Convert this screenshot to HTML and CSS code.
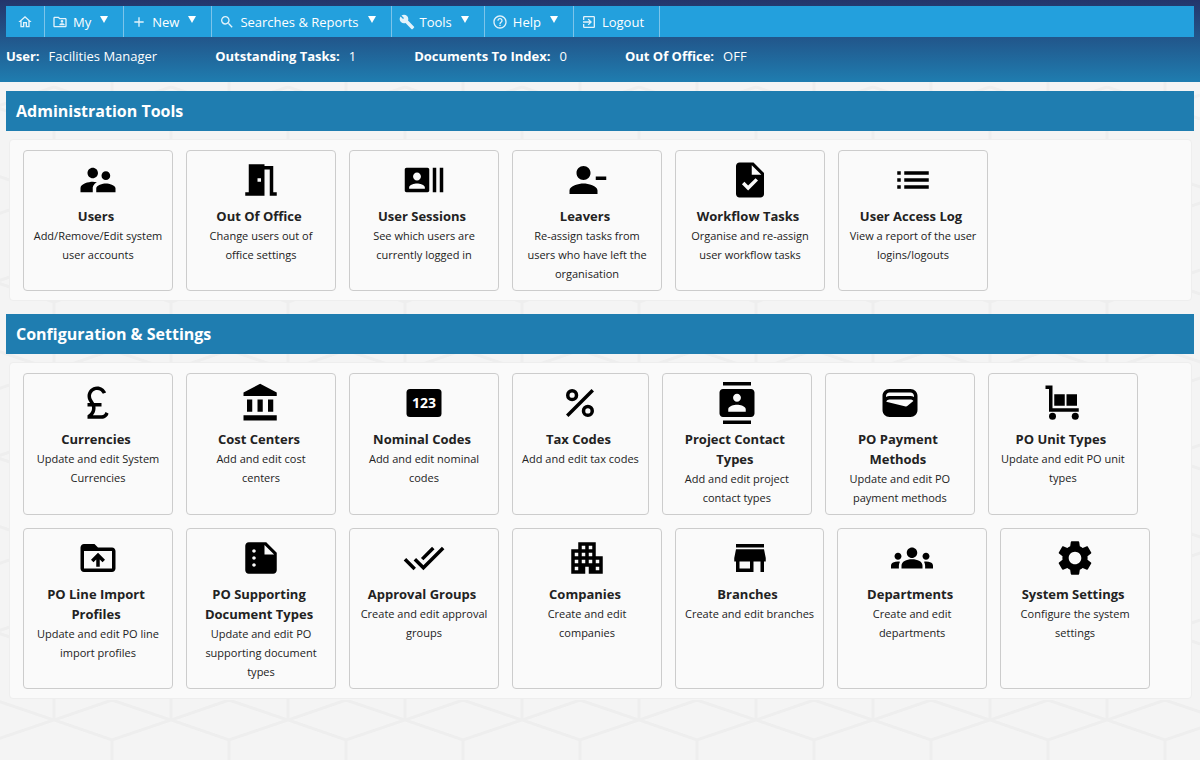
FILE: index.html
```html
<!DOCTYPE html>
<html lang="en">
<head>
    <meta charset="UTF-8">
    <meta name="viewport" content="width=device-width, initial-scale=1.0">
    <title>Administration Tools</title>
    <link rel="stylesheet" href="styles.css">
</head>
<body>
    <header class="top">
        <nav class="menu">
            <a class="menu-item home" href="#" aria-label="Home">
                <svg viewBox="0 0 24 24"><path d="M12 5.7l5 4.5V18h-2v-6H9v6H7v-7.8l5-4.5M12 3L2 12h3v8h6v-6h2v6h6v-8h3L12 3z"/></svg>
            </a>
            <button class="menu-item" type="button">
                <svg viewBox="0 0 24 24"><path d="M20 6h-8l-2-2H4c-1.100 0-2 .9-2 2v12c0 1.100.9 2 2 2h16c1.100 0 2-.9 2-2V8c0-1.100-.9-2-2-2zM4 18V6h5.200l2 2H20v10H4zm11-5c1.100 0 2-.9 2-2s-.9-2-2-2-2 .9-2 2 .9 2 2 2zm-4 4h8v-1c0-1.300-2.700-2-4-2s-4 .7-4 2v1z"/></svg>
                My <span class="arrow"></span>
            </button>
            <button class="menu-item" type="button">
                <svg viewBox="0 0 24 24"><path d="M19 13h-6v6h-2v-6H5v-2h6V5h2v6h6v2z"/></svg>
                New <span class="arrow"></span>
            </button>
            <button class="menu-item" type="button">
                <svg viewBox="0 0 24 24"><path d="M15.500 14h-.79l-.28-.27A6.471 6.471 0 0 0 16 9.500 6.500 6.500 0 1 0 9.500 16c1.610 0 3.090-.59 4.230-1.570l.27.28v.79l5 4.990L20.490 19l-4.990-5zm-6 0C7.010 14 5 11.990 5 9.500S7.010 5 9.500 5 14 7.010 14 9.500 11.990 14 9.500 14z"/></svg>
                Searches &amp; Reports <span class="arrow"></span>
            </button>
            <button class="menu-item" type="button">
                <svg viewBox="0 0 24 24"><path d="M22.610 18.990l-9.080-9.080c.93-2.340.45-5.100-1.440-7C9.790.610 6.210.400 3.660 2.260L7.500 6.110 6.080 7.520 2.250 3.690C.390 6.230.600 9.820 2.900 12.110c1.860 1.860 4.570 2.350 6.890 1.480l9.110 9.110c.39.39 1.020.39 1.410 0l2.300-2.300c.4-.38.4-1.010 0-1.410z"/></svg>
                Tools <span class="arrow"></span>
            </button>
            <button class="menu-item" type="button">
                <svg viewBox="0 0 24 24"><path d="M11 18h2v-2h-2v2zm1-16C6.480 2 2 6.480 2 12s4.480 10 10 10 10-4.480 10-10S17.520 2 12 2zm0 18c-4.410 0-8-3.590-8-8s3.590-8 8-8 8 3.590 8 8-3.590 8-8 8zm0-14c-2.210 0-4 1.790-4 4h2c0-1.100.9-2 2-2s2 .9 2 2c0 2-3 1.750-3 5h2c0-2.250 3-2.500 3-5 0-2.210-1.790-4-4-4z"/></svg>
                Help <span class="arrow"></span>
            </button>
            <a class="menu-item" href="#">
                <svg viewBox="0 0 24 24"><path d="M10.090 15.590L11.500 17l5-5-5-5-1.410 1.410L12.670 11H3v2h9.670l-2.580 2.590zM19 3H5a2 2 0 0 0-2 2v4h2V5h14v14H5v-4H3v4a2 2 0 0 0 2 2h14c1.100 0 2-.9 2-2V5c0-1.100-.9-2-2-2z"/></svg>
                Logout
            </a>
        </nav>
        <dl class="status">
            <div><dt>User:</dt><dd>Facilities Manager</dd></div>
            <div><dt>Outstanding Tasks:</dt><dd>1</dd></div>
            <div><dt>Documents To Index:</dt><dd>0</dd></div>
            <div><dt>Out Of Office:</dt><dd>OFF</dd></div>
        </dl>
    </header>

    <main>
        <section>
            <h2>Administration Tools</h2>
            <div class="panel">
                <a class="card" href="#">
                    <svg viewBox="0 0 24 24"><path d="M16.500 12c1.380 0 2.490-1.120 2.490-2.500S17.880 7 16.500 7 14 8.120 14 9.500s1.120 2.500 2.500 2.500zM9 11c1.660 0 2.990-1.340 2.990-3S10.660 5 9 5 6 6.340 6 8s1.340 3 3 3zm7.500 3c-1.830 0-5.500.92-5.500 2.750V19h11v-2.250c0-1.830-3.670-2.750-5.500-2.750zM9 13c-2.330 0-7 1.170-7 3.500V19h7v-2.250c0-.85.33-2.340 2.370-3.470C10.500 13.100 9.660 13 9 13z"/></svg>
                    <h3>Users</h3>
                    <p>Add/Remove/Edit system user accounts</p>
                </a>
                <a class="card" href="#">
                    <svg viewBox="0 0 24 24"><path fill-rule="evenodd" d="M14 6v15H3v-2h2V3h9v1h5v15h2v2h-4V6h-3zm-4 5v2h2v-2h-2z"/></svg>
                    <h3>Out Of Office</h3>
                    <p>Change users out of office settings</p>
                </a>
                <a class="card" href="#">
                    <svg viewBox="0 0 24 24"><path d="M21 5v14h2V5h-2zm-4 14h2V5h-2v14zM14 5H2c-.55 0-1 .45-1 1v12c0 .55.45 1 1 1h12c.55 0 1-.45 1-1V6c0-.55-.45-1-1-1zM8 7.750c1.240 0 2.250 1.010 2.250 2.250S9.240 12.250 8 12.250 5.750 11.240 5.750 10 6.760 7.750 8 7.750zM12.500 17h-9v-.75c0-1.500 3-2.250 4.500-2.250s4.500.75 4.500 2.250V17z"/></svg>
                    <h3>User Sessions</h3>
                    <p>See which users are currently logged in</p>
                </a>
                <a class="card" href="#">
                    <svg viewBox="0 0 24 24"><path d="M14 8c0-2.210-1.790-4-4-4S6 5.790 6 8s1.790 4 4 4 4-1.790 4-4zm3 2v2h6v-2h-6zM2 18v2h16v-2c0-2.660-5.330-4-8-4s-8 1.340-8 4z"/></svg>
                    <h3>Leavers</h3>
                    <p>Re-assign tasks from users who have left the organisation</p>
                </a>
                <a class="card" href="#">
                    <svg viewBox="0 0 24 24"><path d="M14 2H6c-1.100 0-2 .9-2 2v16c0 1.100.89 2 1.990 2H18c1.100 0 2-.9 2-2V8l-6-6zm-3.060 16L7.400 14.460l1.410-1.410 2.120 2.120 4.240-4.240 1.410 1.410L10.940 18zM13 9V3.500L18.500 9H13z"/></svg>
                    <h3>Workflow Tasks</h3>
                    <p>Organise and re-assign user workflow tasks</p>
                </a>
                <a class="card" href="#">
                    <svg viewBox="0 0 24 24"><path d="M3 13h2v-2H3v2zm0 4h2v-2H3v2zm0-8h2V7H3v2zm4 4h14v-2H7v2zm0 4h14v-2H7v2zM7 7v2h14V7H7z"/></svg>
                    <h3>User Access Log</h3>
                    <p>View a report of the user logins/logouts</p>
                </a>
            </div>
        </section>

        <section>
            <h2>Configuration &amp; Settings</h2>
            <div class="panel">
                <a class="card" href="#">
                    <svg viewBox="0 0 24 24"><path d="M14 21c1.930 0 3.620-1.170 4-3l-1.750-.88C16 18.210 15.330 19 14 19H9.100c.83-1 1.500-2.340 1.500-4 0-.35-.03-.69-.08-1H14v-2H9.820C9 10.420 8 9.600 8 8c0-1.930 1.570-3.500 3.500-3.500 1.500 0 2.790.95 3.280 2.280L16.630 6c-.8-2.050-2.790-3.500-5.130-3.500C8.460 2.500 6 4.960 6 8c0 1.780.79 2.900 1.490 4H6v2h2.470c.08.31.13.64.13 1 0 2.700-2.600 4-2.600 4v2h8z"/></svg>
                    <h3>Currencies</h3>
                    <p>Update and edit System Currencies</p>
                </a>
                <a class="card" href="#">
                    <svg viewBox="0 0 24 24"><path d="M4 10v7h3v-7H4zm6 0v7h3v-7h-3zM2 22h19v-3H2v3zm14-12v7h3v-7h-3zm-4.500-9L2 6v2h19V6l-9.500-5z"/></svg>
                    <h3>Cost Centers</h3>
                    <p>Add and edit cost centers</p>
                </a>
                <a class="card" href="#">
                    <svg viewBox="0 0 24 24">
                        <rect x="2" y="4" width="20" height="16" rx="2"/>
                        <text class="digits" x="12" y="15" text-anchor="middle">123</text>
                    </svg>
                    <h3>Nominal Codes</h3>
                    <p>Add and edit nominal codes</p>
                </a>
                <a class="card" href="#">
                    <svg viewBox="0 0 24 24"><path fill-rule="evenodd" d="M7.500 4a3.500 3.500 0 1 0 0 7 3.500 3.500 0 0 0 0-7zm0 5a1.500 1.500 0 1 1 0-3 1.500 1.500 0 0 1 0 3zM16.500 13a3.500 3.500 0 1 0 0 7 3.500 3.500 0 0 0 0-7zm0 5a1.500 1.500 0 1 1 0-3 1.500 1.500 0 0 1 0 3zM5.410 20L4 18.590 18.590 4 20 5.410z"/></svg>
                    <h3>Tax Codes</h3>
                    <p>Add and edit tax codes</p>
                </a>
                <a class="card" href="#">
                    <svg viewBox="0 0 24 24"><path d="M20 0H4v2h16V0zM4 24h16v-2H4v2zM20 4H4c-1.100 0-2 .9-2 2v12c0 1.100.9 2 2 2h16c1.100 0 2-.9 2-2V6c0-1.100-.9-2-2-2zm-8 2.750c1.240 0 2.250 1.010 2.250 2.250s-1.010 2.250-2.250 2.250S9.750 10.240 9.750 9 10.760 6.750 12 6.750zM17 17H7v-1.500c0-1.670 3.330-2.500 5-2.500s5 .83 5 2.500V17z"/></svg>
                    <h3>Project Contact Types</h3>
                    <p>Add and edit project contact types</p>
                </a>
                <a class="card" href="#">
                    <svg viewBox="0 0 24 24"><path d="M18 4H6C3.790 4 2 5.790 2 8v8c0 2.210 1.790 4 4 4h12c2.210 0 4-1.790 4-4V8c0-2.210-1.790-4-4-4zm-1.860 9.770c-.24.2-.57.28-.88.2L4.150 11.250C4.450 10.520 5.160 10 6 10h12c.67 0 1.260.34 1.630.84l-3.490 2.930zM18 6c1.100 0 2 .9 2 2v.55c-.59-.34-1.270-.55-2-.55H6c-.73 0-1.410.21-2 .55V8c0-1.100.9-2 2-2h12z"/></svg>
                    <h3>PO Payment Methods</h3>
                    <p>Update and edit PO payment methods</p>
                </a>
                <a class="card" href="#">
                    <svg viewBox="0 0 24 24"><path d="M2 2h4v13h15v2H4V4H2V2zm5 5h6v6.500H7V7zm7 0h6v6.500h-6V7z"/><circle cx="6" cy="19.500" r="2"/><circle cx="19" cy="19.500" r="2"/></svg>
                    <h3>PO Unit Types</h3>
                    <p>Update and edit PO unit types</p>
                </a>
                <a class="card" href="#">
                    <svg viewBox="0 0 24 24"><path d="M20 6h-8l-2-2H4c-1.100 0-1.990.9-1.990 2L2 18c0 1.100.9 2 2 2h16c1.100 0 2-.9 2-2V8c0-1.100-.9-2-2-2zm0 12H4V8h16v10zM8 13.010l1.410 1.410L11 12.840V17h2v-4.160l1.590 1.590L16 13.010 12.010 9 8 13.010z"/></svg>
                    <h3>PO Line Import Profiles</h3>
                    <p>Update and edit PO line import profiles</p>
                </a>
                <a class="card" href="#">
                    <svg viewBox="0 0 24 24"><path d="M15 3H5c-1.100 0-1.990.9-1.990 2L3 19c0 1.100.89 2 1.990 2H19c1.100 0 2-.9 2-2V9l-6-6zM8 17c-.55 0-1-.45-1-1s.45-1 1-1 1 .45 1 1-.45 1-1 1zm0-4c-.55 0-1-.45-1-1s.45-1 1-1 1 .45 1 1-.45 1-1 1zm0-4c-.55 0-1-.45-1-1s.45-1 1-1 1 .45 1 1-.45 1-1 1zm6 1V4.500l5.500 5.500H14z"/></svg>
                    <h3>PO Supporting Document Types</h3>
                    <p>Update and edit PO supporting document types</p>
                </a>
                <a class="card" href="#">
                    <svg viewBox="0 0 24 24"><path d="M18 7l-1.410-1.410-6.340 6.340 1.410 1.410L18 7zm4.240-1.410L11.660 16.170 7.480 12l-1.410 1.410L11.660 19l12-12-1.420-1.410zM.410 13.410L6 19l1.410-1.410L1.830 12 .410 13.410z"/></svg>
                    <h3>Approval Groups</h3>
                    <p>Create and edit approval groups</p>
                </a>
                <a class="card" href="#">
                    <svg viewBox="0 0 24 24"><path d="M17 11V3H7v4H3v14h8v-4h2v4h8V11h-4zM7 19H5v-2h2v2zm0-4H5v-2h2v2zm0-4H5V9h2v2zm4 4H9v-2h2v2zm0-4H9V9h2v2zm0-4H9V5h2v2zm4 8h-2v-2h2v2zm0-4h-2V9h2v2zm0-4h-2V5h2v2zm4 12h-2v-2h2v2zm0-4h-2v-2h2v2z"/></svg>
                    <h3>Companies</h3>
                    <p>Create and edit companies</p>
                </a>
                <a class="card" href="#">
                    <svg viewBox="0 0 24 24"><path d="M20 4H4v2h16V4zm1 10v-2l-1-5H4l-1 5v2h1v6h10v-6h4v6h2v-6h1zm-9 4H6v-4h6v4z"/></svg>
                    <h3>Branches</h3>
                    <p>Create and edit branches</p>
                </a>
                <a class="card" href="#">
                    <svg viewBox="0 0 24 24"><path d="M12 12.750c1.630 0 3.070.39 4.240.9 1.080.48 1.760 1.560 1.760 2.730V18H6v-1.610c0-1.180.68-2.260 1.760-2.730 1.170-.52 2.610-.91 4.240-.91zM4 13c1.100 0 2-.9 2-2s-.9-2-2-2-2 .9-2 2 .9 2 2 2zm1.130 1.100C4.760 14.040 4.390 14 4 14c-.99 0-1.930.21-2.780.58C.480 14.900 0 15.620 0 16.430V18h4.500v-1.610c0-.83.23-1.610.63-2.290zM20 13c1.100 0 2-.9 2-2s-.9-2-2-2-2 .9-2 2 .9 2 2 2zm4 3.430c0-.81-.48-1.530-1.220-1.850-.85-.37-1.790-.58-2.780-.58-.39 0-.76.04-1.130.1.400.68.63 1.460.63 2.290V18H24v-1.570zM12 6c1.660 0 3 1.340 3 3s-1.340 3-3 3-3-1.340-3-3 1.340-3 3-3z"/></svg>
                    <h3>Departments</h3>
                    <p>Create and edit departments</p>
                </a>
                <a class="card" href="#">
                    <svg viewBox="0 0 24 24"><path d="M19.140 12.940c.04-.3.06-.61.06-.94 0-.32-.02-.64-.07-.94l2.030-1.580c.18-.14.23-.41.12-.61l-1.920-3.320c-.12-.22-.37-.29-.59-.22l-2.390.96c-.5-.38-1.030-.7-1.620-.94l-.36-2.540c-.04-.24-.24-.41-.48-.41h-3.840c-.24 0-.43.17-.47.41l-.36 2.540c-.59.24-1.130.57-1.620.94l-2.390-.96c-.22-.08-.47 0-.59.22L2.740 8.870c-.12.21-.08.47.12.61l2.030 1.580c-.05.3-.09.63-.09.94s.02.64.07.94l-2.030 1.580c-.18.14-.23.41-.12.61l1.920 3.320c.12.22.37.29.59.22l2.390-.96c.5.38 1.030.7 1.620.94l.36 2.540c.05.24.24.41.48.41h3.840c.24 0 .44-.17.47-.41l.36-2.540c.59-.24 1.130-.56 1.620-.94l2.390.96c.22.08.47 0 .59-.22l1.920-3.320c.12-.22.07-.47-.12-.61l-2.010-1.580zM12 15.600c-1.980 0-3.600-1.620-3.600-3.600s1.620-3.600 3.600-3.600 3.600 1.620 3.600 3.600-1.620 3.600-3.600 3.600z"/></svg>
                    <h3>System Settings</h3>
                    <p>Configure the system settings</p>
                </a>
            </div>
        </section>
    </main>
</body>
</html>
```

FILE: styles.css
```css
* {
    box-sizing: border-box;
}
body {
    margin: 0;
    font-family: "Open Sans", "Noto Sans", sans-serif;
    font-size: 13px;
    color: #222;
    background-color: #f4f4f4;
    background-image: url("data:image/svg+xml,%3Csvg xmlns='http://www.w3.org/2000/svg' width='117' height='175' fill='none' stroke='%23eeeeee' stroke-width='3'%3E%3Cpath d='M0 20L58 0L117 20L58 40ZM58 40V107M0 87L58 107L0 127M117 87L58 107L117 127M0 127V175M117 127V175M0 0V20M117 0V20'/%3E%3C/svg%3E");
    background-position: 54px 0;
}
.top {
    padding: 6px 6px 16px;
    background: linear-gradient(#24356b, #1f7db0);
    color: #fff;
}
.menu {
    display: flex;
    height: 31px;
    background-color: #23a0dd;
}
.menu-item {
    display: flex;
    align-items: center;
    gap: 5px;
    padding: 0 15px 0 7px;
    border: none;
    border-right: 1px solid #7cc4ea;
    background: none;
    color: #fff;
    font-family: inherit;
    font-size: 13px;
    text-decoration: none;
    cursor: pointer;
}
.menu-item:hover {
    background-color: #1f7db0;
}
.menu-item svg {
    width: 16px;
    height: 16px;
    fill: #e4f3fb;
}
.home {
    padding: 0 11px;
}
.arrow {
    margin: 0 0 4px 4px;
    border: 4px solid transparent;
    border-top: 7px solid #fff;
    border-bottom: none;
}
.status {
    display: flex;
    flex-wrap: wrap;
    gap: 0 58px;
    margin: 9px 0 0;
    line-height: 20px;
}
.status div {
    display: flex;
    gap: 9px;
}
dt {
    font-weight: bold;
}
dd {
    margin: 0;
}
main {
    padding: 9px 6px;
}
h2 {
    margin: 0 0 8px;
    padding: 0 10px;
    background-color: #1f7db0;
    color: #fff;
    font-size: 16px;
    line-height: 40px;
}
.panel {
    display: flex;
    flex-wrap: wrap;
    gap: 13px;
    margin: 0 2px 13px 3px;
    padding: 10px 13px 9px;
    border: 1px solid #eee;
    border-radius: 4px;
    background-color: #fafafa;
}
.card {
    max-width: 150px;
    padding: 8px 9px 7px;
    border: 1px solid #ccc;
    border-radius: 4px;
    color: #222;
    text-align: center;
    text-decoration: none;
}
.card:hover {
    background-color: #eef6fb;
}
.card svg {
    display: block;
    width: 42px;
    height: 42px;
    margin: 0 auto 5px;
    fill: #000;
}
.card .digits {
    fill: #fff;
    font-size: 8px;
    font-weight: bold;
}
h3 {
    margin: 0;
    padding-right: 4px;
    font-size: 13px;
    line-height: 20px;
}
.card p {
    margin: 0;
    font-size: 11px;
    line-height: 19px;
}
```
